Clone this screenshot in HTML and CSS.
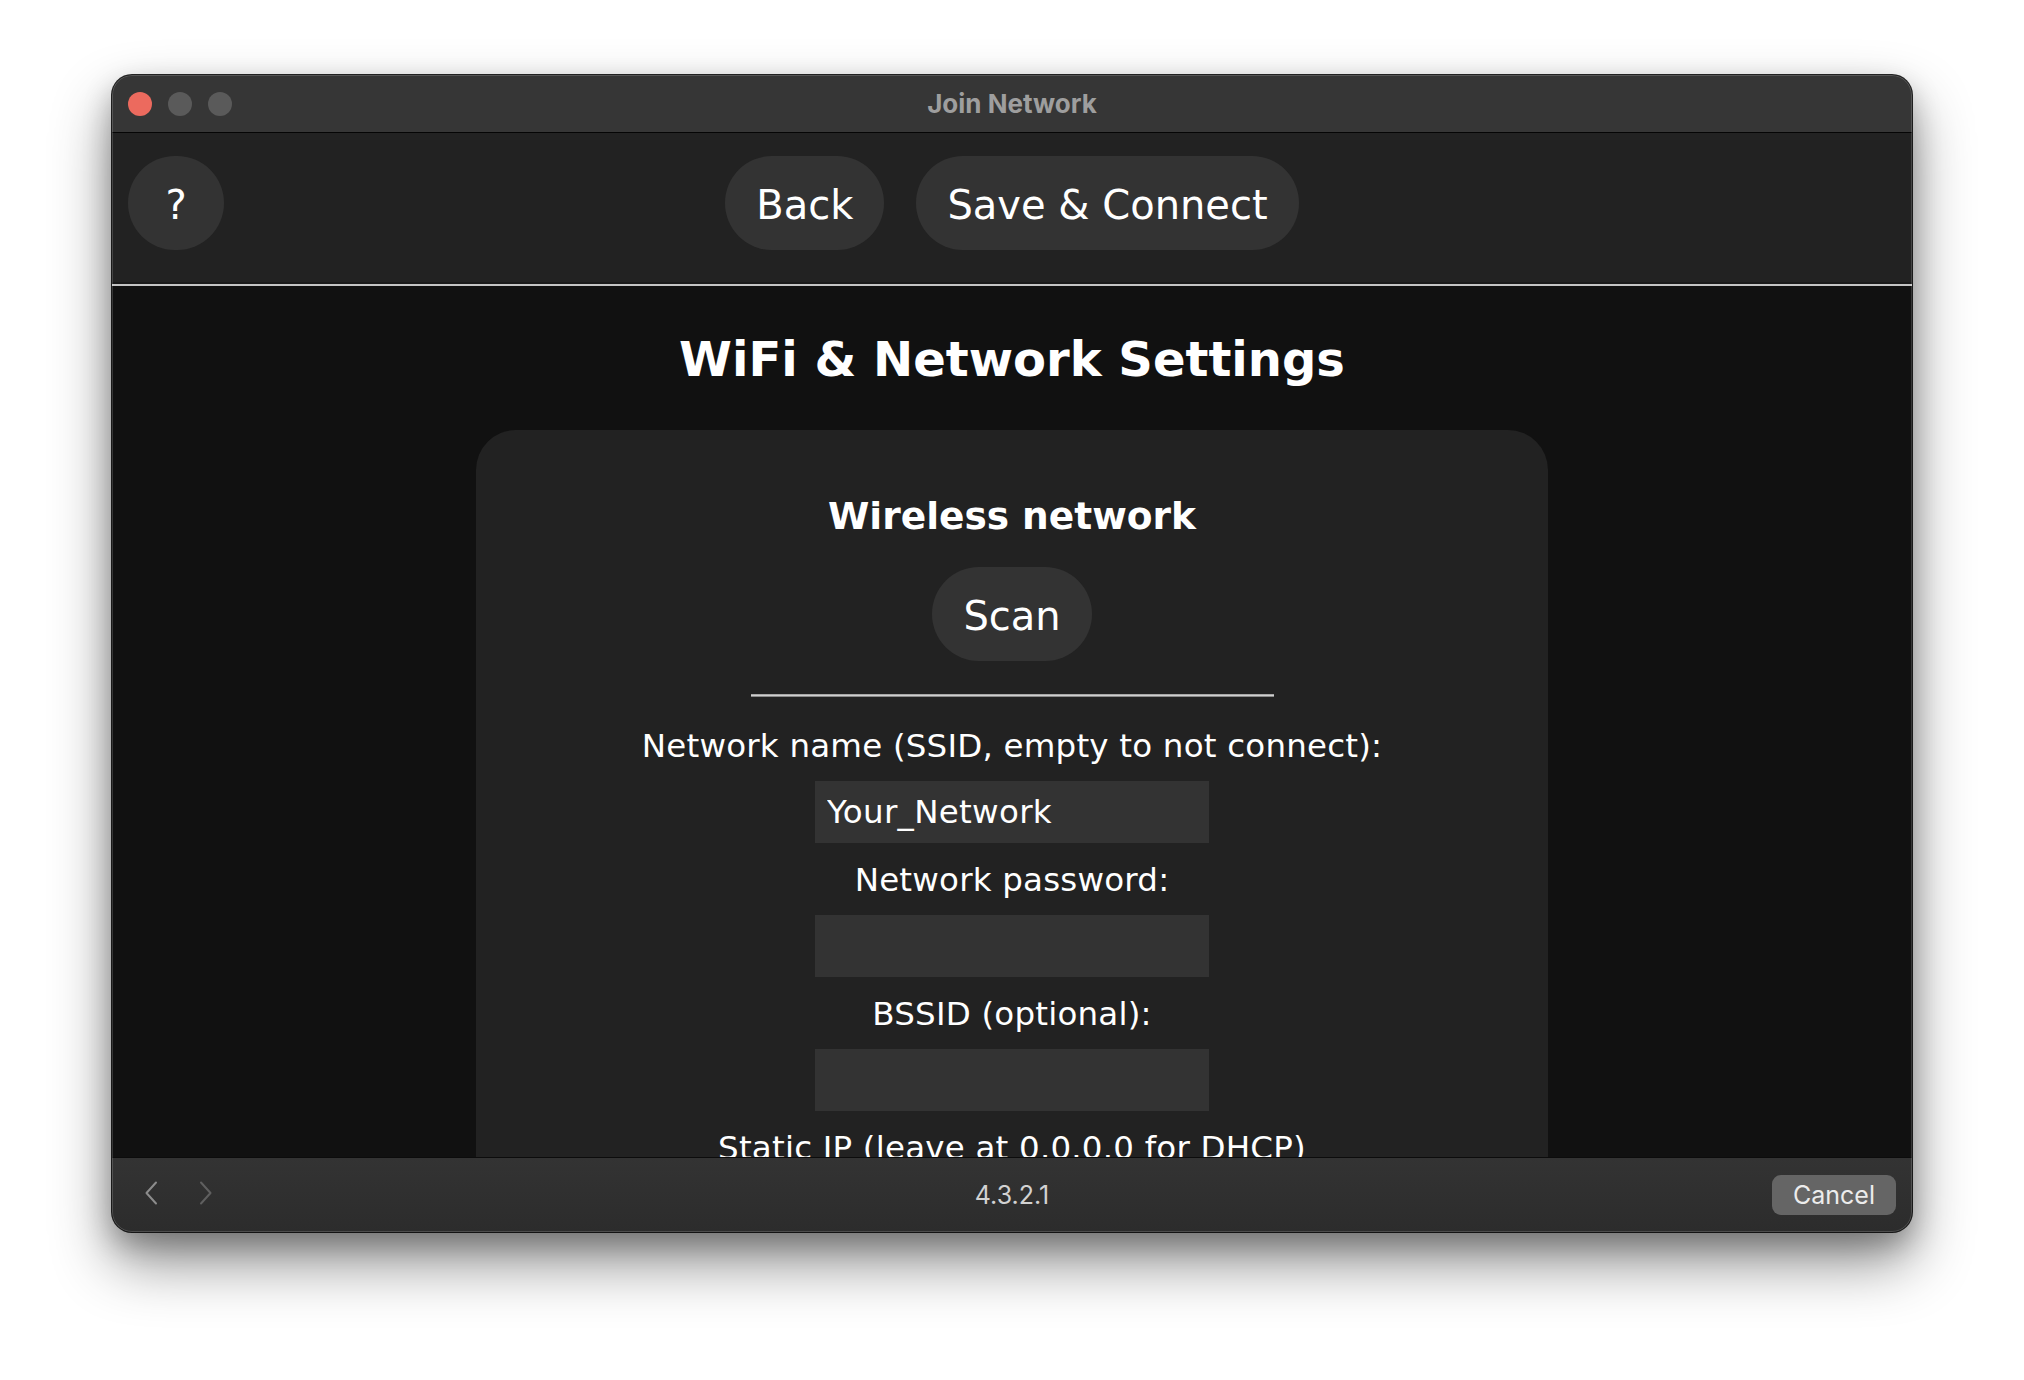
FILE: index.html
```html
<!DOCTYPE html>
<html lang="en">
<head>
<meta charset="utf-8">
<title>Join Network</title>
<link rel="stylesheet" href="styles.css">
</head>
<body>
<div class="page">
  <div class="window">
    <div class="titlebar">
      <div class="lights">
        <span class="light red"></span>
        <span class="light"></span>
        <span class="light"></span>
      </div>
      <div class="title">Join Network</div>
      <div class="tb-spacer"></div>
    </div>
    <div class="toolbar">
      <div class="tool-left"><button class="btn help" type="button">?</button></div>
      <div class="tool-center">
        <button class="btn" type="button">Back</button>
        <button class="btn" type="button">Save &amp; Connect</button>
      </div>
      <div class="tool-right"></div>
    </div>
    <div class="tool-sep"></div>
    <div class="content">
      <h2 class="page-title">WiFi &amp; Network Settings</h2>
      <div class="card">
        <h3 class="card-title">Wireless network</h3>
        <button class="btn scan" type="button">Scan</button>
        <div class="rule"></div>
        <div class="field-label first">Network name (SSID, empty to not connect):</div>
        <input class="field" type="text" value="Your_Network">
        <div class="field-label">Network password:</div>
        <input class="field" type="password" value="">
        <div class="field-label">BSSID (optional):</div>
        <input class="field" type="text" value="">
        <div class="field-label">Static IP (leave at 0.0.0.0 for DHCP)</div>
        <input class="field" type="text" value="">
      </div>
    </div>
    <div class="bottombar">
      <div class="nav">
        <svg class="chev" width="14" height="24" viewBox="0 0 14 24"><path d="M12 1.5 L2.5 12 L12 22.5" fill="none" stroke="#8c8c8c" stroke-width="2" stroke-linecap="round" stroke-linejoin="round"/></svg>
        <svg class="chev" width="14" height="24" viewBox="0 0 14 24"><path d="M2 1.5 L11.5 12 L2 22.5" fill="none" stroke="#5f5f5f" stroke-width="2" stroke-linecap="round" stroke-linejoin="round"/></svg>
      </div>
      <div class="ip">4.3.2.1</div>
      <div class="bb-right"><button class="cancel" type="button">Cancel</button></div>
    </div>
  </div>
</div>
</body>
</html>
```

FILE: styles.css
```css
html, body {
  margin: 0;
  padding: 0;
  background: #ffffff;
}

.page {
  padding: 75px 112px 148px 112px;
  width: 1800px;
}

.window {
  position: relative;
  width: 1800px;
  height: 1157px;
  border-radius: 20px;
  overflow: hidden;
  display: flex;
  flex-direction: column;
  background: #111111;
  box-shadow: 0 0 0 1px rgba(0,0,0,0.85), 0 30px 60px rgba(0,0,0,0.45), 0 12px 28px rgba(0,0,0,0.25);
}

.window::after {
  content: "";
  position: absolute;
  inset: 0;
  border-radius: 20px;
  border: 1px solid rgba(255,255,255,0.16);
  pointer-events: none;
}

/* Title bar */
.titlebar {
  flex: 0 0 57px;
  height: 57px;
  background: #363636;
  border-bottom: 1px solid #050505;
  display: grid;
  grid-template-columns: 1fr auto 1fr;
  align-items: center;
}

.lights {
  display: flex;
  gap: 16px;
  padding-left: 16px;
  padding-top: 1px;
}

.light {
  width: 24px;
  height: 24px;
  border-radius: 50%;
  background: #5a5a5a;
}

.light.red {
  background: #ec6a5e;
}

.title {
  font-family: Inter, "Liberation Sans", sans-serif;
  font-weight: 700;
  font-size: 26px;
  color: #9e9e9e;
}

/* Toolbar */
.toolbar {
  flex: 0 0 149px;
  height: 149px;
  box-sizing: border-box;
  background: #222222;
  padding-top: 23px;
  display: grid;
  grid-template-columns: 1fr auto 1fr;
  align-items: start;
}

.tool-left {
  padding-left: 16px;
}

.tool-center {
  display: flex;
  gap: 32px;
  padding: 0 16px;
}

.btn {
  font-family: "DejaVu Sans", Verdana, sans-serif;
  font-size: 40px;
  color: #ffffff;
  background: #333333;
  border: none;
  border-radius: 48px;
  height: 94px;
  box-sizing: border-box;
  padding: 4px 31px 0 31px;
  line-height: 90px;
  margin: 0;
  cursor: pointer;
  white-space: nowrap;
}

.btn.help {
  width: 96px;
  padding-left: 0;
  padding-right: 0;
}

.tool-sep {
  flex: 0 0 2px;
  height: 2px;
  background: #c4c4c4;
  border-top: 2px solid #1a1a1a;
}

/* Content */
.content {
  flex: 1 1 auto;
  overflow: hidden;
  background: #111111;
  color: #ffffff;
  font-family: "DejaVu Sans", Verdana, sans-serif;
  text-align: center;
}

.page-title {
  margin: 41px 0 0 0;
  font-size: 48px;
  line-height: 64px;
  font-weight: 700;
}

.card {
  width: 1072px;
  margin: 39px auto 0 auto;
  padding-top: 58px;
  padding-bottom: 40px;
  background: #222222;
  border-radius: 40px;
  display: flex;
  flex-direction: column;
  align-items: center;
}

.card-title {
  margin: 0;
  font-size: 37.5px;
  line-height: 56px;
  font-weight: 700;
}

.btn.scan {
  margin-top: 23px;
}

.rule {
  margin-top: 33px;
  width: 523px;
  height: 1px;
  background: #cfcfcf;
  border-top: 1px solid #a8a8a8;
  border-bottom: 1px solid #8a8a8a;
}

.field-label {
  margin-top: 5px;
  height: 64px;
  line-height: 64px;
  font-size: 32.5px;
  letter-spacing: 0.2px;
  white-space: nowrap;
}

.field-label.first {
  margin-top: 17px;
}

.field {
  margin-top: 3px;
  width: 394px;
  height: 62px;
  box-sizing: border-box;
  padding: 0 12px;
  border: none;
  outline: none;
  background: #333333;
  color: #ffffff;
  font-family: "DejaVu Sans", Verdana, sans-serif;
  font-size: 32.5px;
  letter-spacing: 0.3px;
  line-height: 62px;
}

/* Bottom bar */
.bottombar {
  flex: 0 0 74px;
  height: 74px;
  border-top: 1px solid #0c0c0c;
  background: linear-gradient(#333333, #2c2c2c);
  display: grid;
  grid-template-columns: 1fr auto 1fr;
  align-items: center;
}

.nav {
  display: flex;
  gap: 41px;
  padding-left: 32px;
  padding-bottom: 4px;
}

.chev {
  display: block;
}

.ip {
  font-family: Inter, "Liberation Sans", sans-serif;
  font-size: 25px;
  color: #d2d2d2;
}

.bb-right {
  display: flex;
  justify-content: flex-end;
  padding-right: 16px;
}

.cancel {
  width: 124px;
  height: 40px;
  border: none;
  border-radius: 9px;
  background: #656565;
  color: #ececec;
  font-family: Inter, "Liberation Sans", sans-serif;
  font-size: 25px;
  padding: 0;
  margin-top: 0;
}
```
